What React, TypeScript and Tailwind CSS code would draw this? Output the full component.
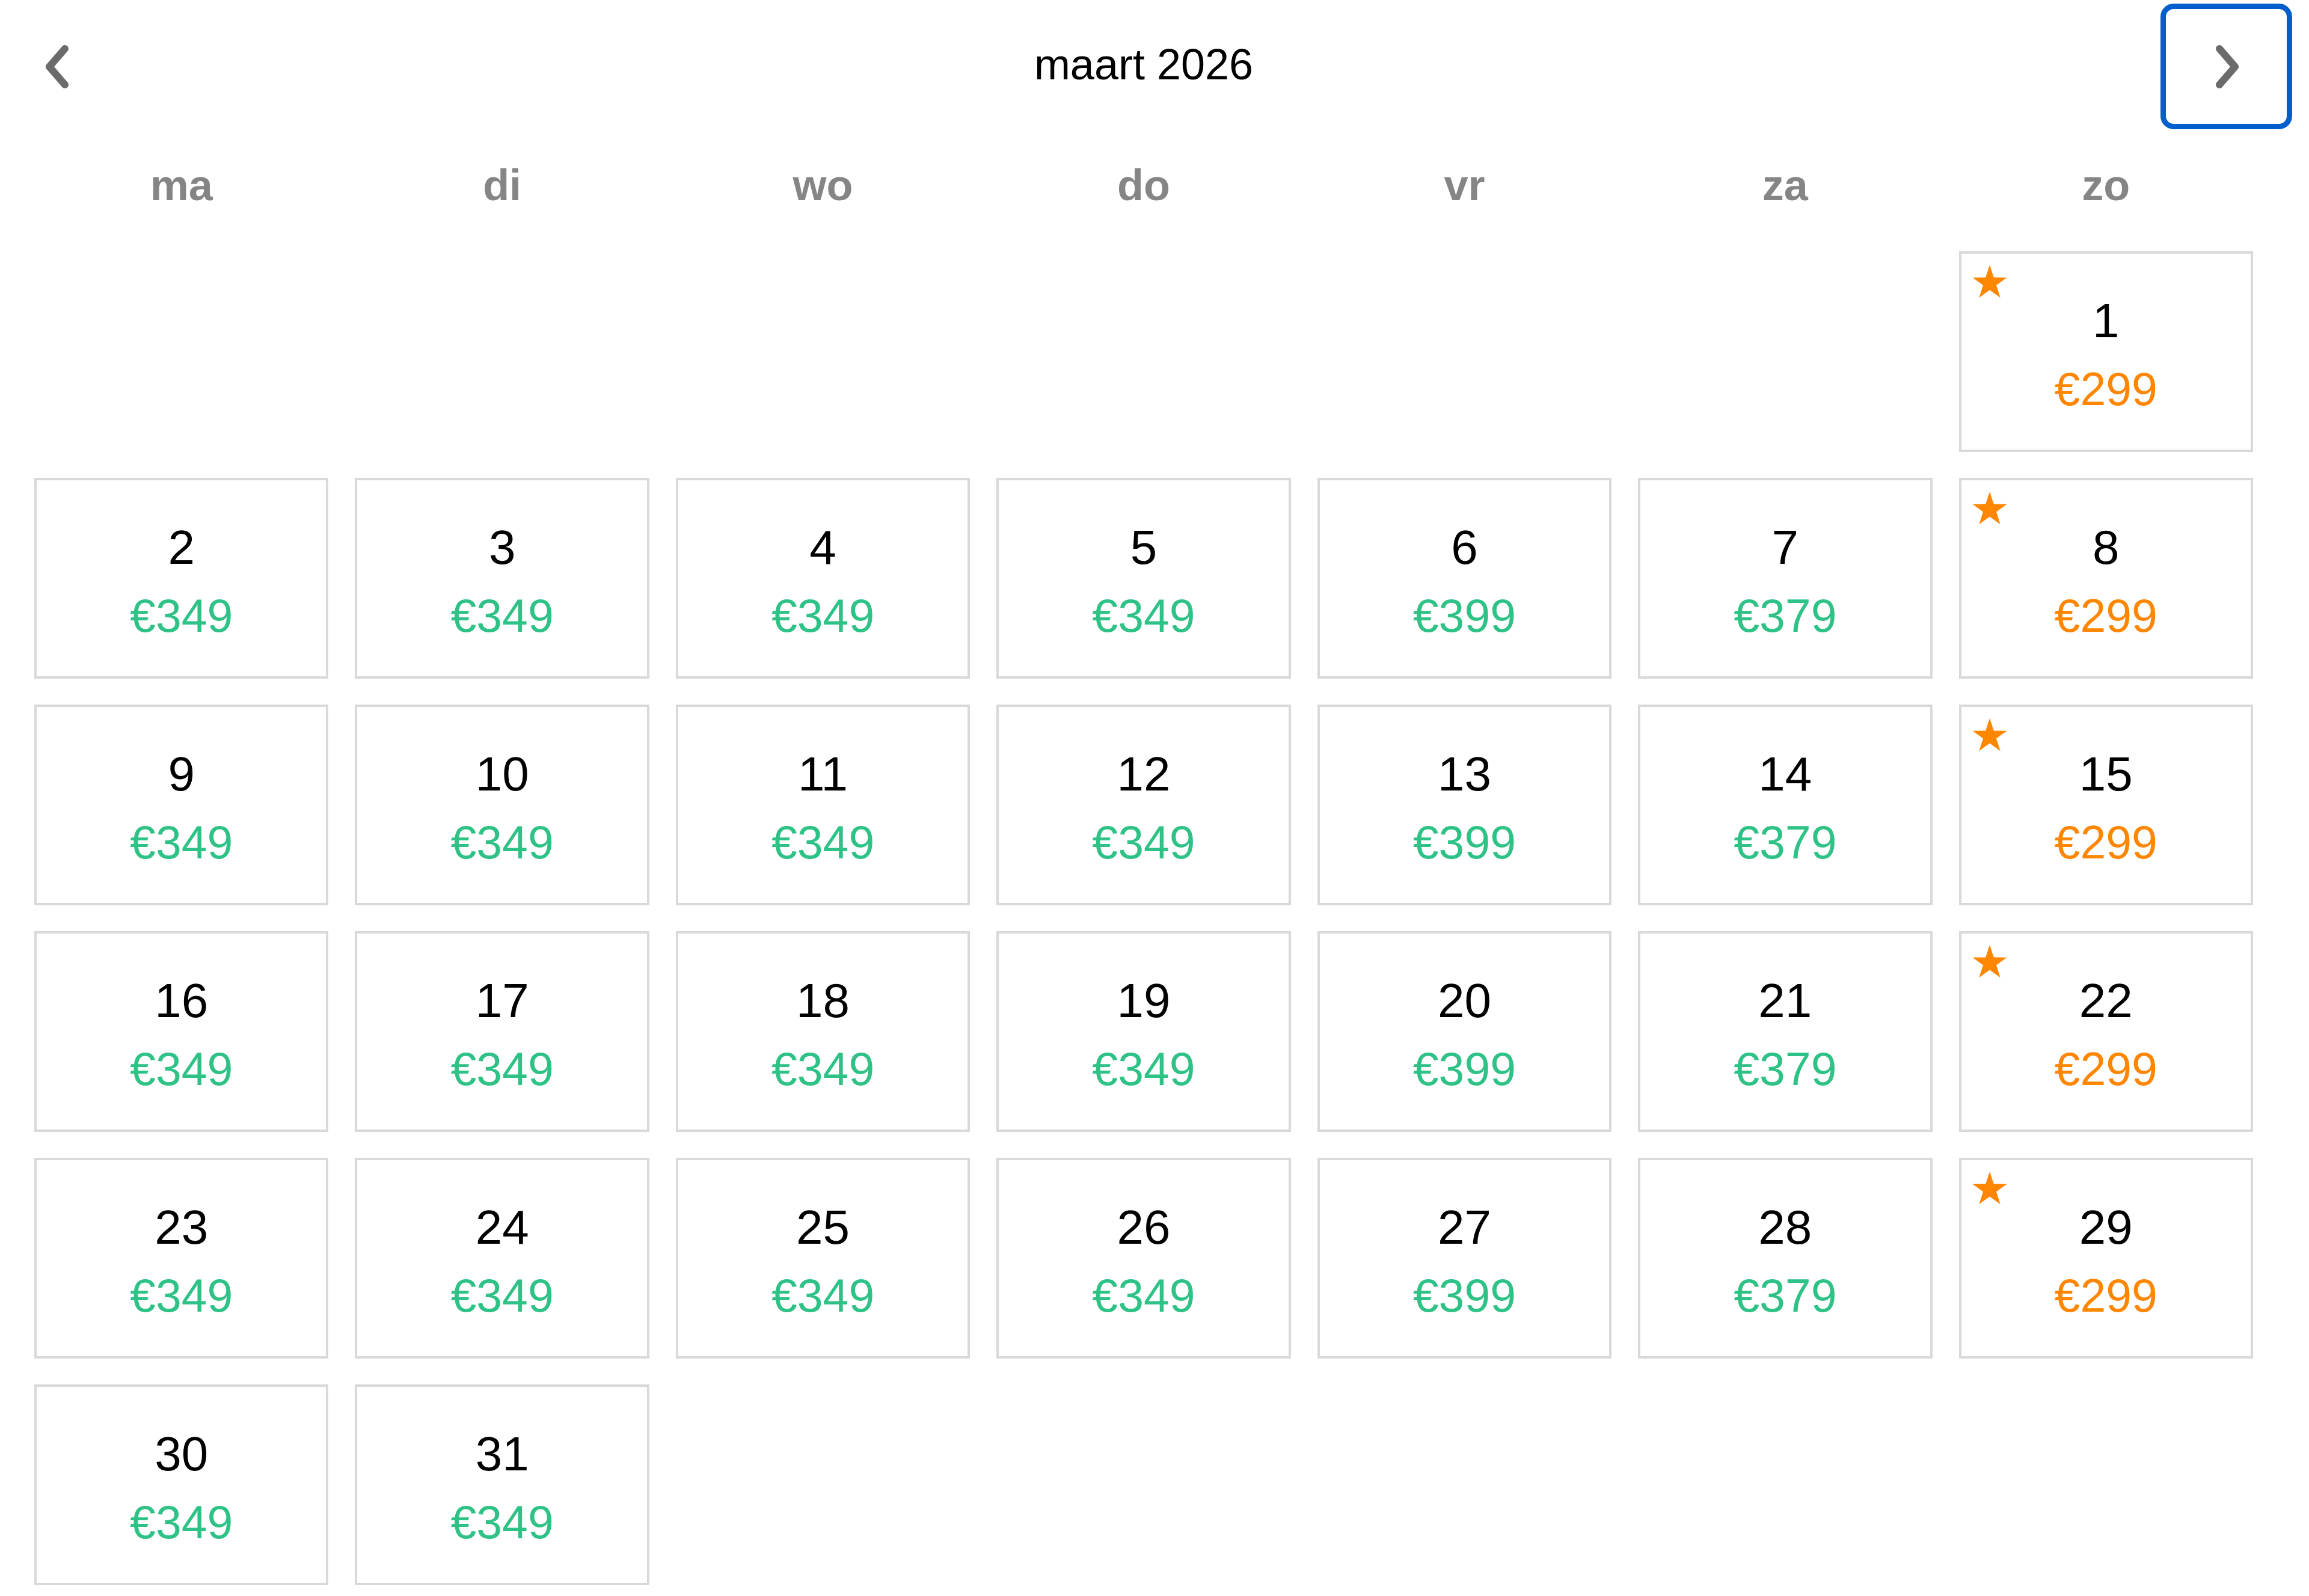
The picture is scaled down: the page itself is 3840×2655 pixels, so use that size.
import React from "react";

const WEEKDAYS = ["ma", "di", "wo", "do", "vr", "za", "zo"];

// prijs per weekdag (ma t/m zo)
const PRICES = [349, 349, 349, 349, 399, 379, 299];

const FIRST_OFFSET = 6; // 1 maart 2026 valt op zondag
const DAYS_IN_MONTH = 31;

function Chevron({ dir }: { dir: "left" | "right" }) {
    return (
        <svg width="44" height="72" viewBox="0 0 44 72" fill="none">
            <polyline
                points={dir === "left" ? "34,6 8,36 34,66" : "10,6 36,36 10,66"}
                stroke="#6b6b6b"
                strokeWidth="12"
                strokeLinecap="round"
                strokeLinejoin="round"
            />
        </svg>
    );
}

function Star() {
    return (
        <svg width="58" height="56" viewBox="0 0 58 56" className="absolute left-[18px] top-[19px]">
            <polygon
                points="29,0 35.8,20.6 57.5,20.7 40,33.5 46.7,54.2 29,41.4 11.3,54.2 18,33.5 0.5,20.7 22.2,20.6"
                fill="#ff8600"
            />
        </svg>
    );
}

function DayCell({ day, col }: { day: number; col: number }) {
    const deal = col === 6;
    return (
        <div className="relative h-[334px] border-[4px] border-[#d9d9d9] bg-white flex flex-col items-center pt-[72px]">
            {deal && <Star />}
            <div className="text-[80px] leading-[80px] text-black">{day}</div>
            <div className={`mt-[35px] text-[77px] leading-[76px] ${deal ? "text-[#ff8600]" : "text-[#2fc286]"}`}>
                €{PRICES[col]}
            </div>
        </div>
    );
}

export default function App() {
    const cells: (number | null)[] = [];
    for (let i = 0; i < FIRST_OFFSET; i++) cells.push(null);
    for (let d = 1; d <= DAYS_IN_MONTH; d++) cells.push(d);

    return (
        <div className="min-h-screen bg-white font-['Liberation_Sans',Arial,sans-serif] pl-[57px] pr-[93px] pt-[6px]">
            {/* Header */}
            <div className="grid grid-cols-[1fr_auto_1fr] items-center h-[209px]">
                <button className="justify-self-start -ml-[29px] w-[136px] h-[209px] flex items-center justify-center">
                    <Chevron dir="left" />
                </button>
                <div className="text-[72px] leading-[72px] text-black pb-[8px]">maart 2026</div>
                <button className="justify-self-end -mr-[65px] w-[219px] h-[209px] rounded-[22px] border-[9px] border-[#005fcc] flex items-center justify-center">
                    <Chevron dir="right" />
                </button>
            </div>

            {/* Weekdagen */}
            <div className="grid grid-cols-7 gap-x-[44px] mt-[57px]">
                {WEEKDAYS.map((w) => (
                    <div key={w} className="text-center text-[72px] leading-[72px] font-bold text-[#858585]">
                        {w}
                    </div>
                ))}
            </div>

            {/* Dagen */}
            <div className="grid grid-cols-7 gap-x-[44px] gap-y-[43px] mt-[74px]">
                {cells.map((d, i) =>
                    d === null ? (
                        <div key={`e${i}`} className="h-[334px]" />
                    ) : (
                        <DayCell key={d} day={d} col={i % 7} />
                    )
                )}
            </div>
        </div>
    );
}
